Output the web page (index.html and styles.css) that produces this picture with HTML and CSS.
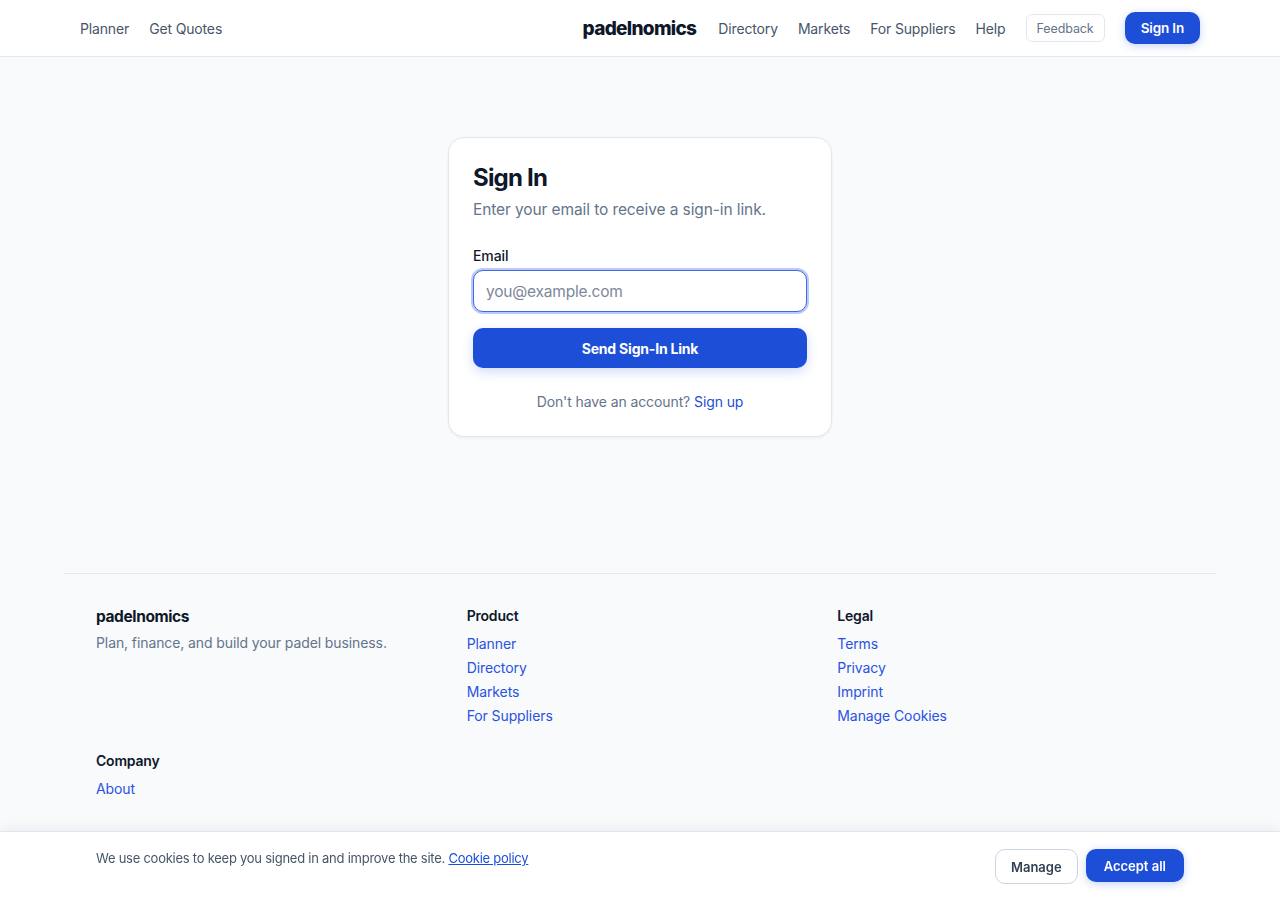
FILE: index.html
```html
<!DOCTYPE html>
<html lang="en">
<head>
<meta charset="utf-8">
<title>Sign In - padelnomics</title>
<link rel="stylesheet" href="styles.css">
</head>
<body>
<header class="topbar">
  <div class="topbar-inner">
    <nav class="nav-left">
      <a href="#">Planner</a>
      <a href="#">Get Quotes</a>
    </nav>
    <div class="nav-right">
      <a class="logo" href="#">padelnomics</a>
      <a href="#">Directory</a>
      <a href="#">Markets</a>
      <a href="#">For Suppliers</a>
      <a href="#">Help</a>
      <button class="btn-feedback">Feedback</button>
      <a class="btn-signin" href="#">Sign In</a>
    </div>
  </div>
</header>

<main class="main">
  <section class="card">
    <h1 class="card-title">Sign In</h1>
    <p class="card-sub">Enter your email to receive a sign-in link.</p>
    <form class="form">
      <label class="label" for="email">Email</label>
      <input class="input" id="email" type="email" placeholder="you@example.com">
      <button type="button" class="btn-primary">Send Sign-In Link</button>
    </form>
    <p class="card-foot">Don't have an account? <a href="#">Sign up</a></p>
  </section>
</main>

<footer class="footer">
  <div class="footer-inner">
    <div class="fcol">
      <div class="flogo">padelnomics</div>
      <p class="ftag">Plan, finance, and build your padel business.</p>
    </div>
    <div class="fcol">
      <h4>Product</h4>
      <a href="#">Planner</a>
      <a href="#">Directory</a>
      <a href="#">Markets</a>
      <a href="#">For Suppliers</a>
    </div>
    <div class="fcol">
      <h4>Legal</h4>
      <a href="#">Terms</a>
      <a href="#">Privacy</a>
      <a href="#">Imprint</a>
      <a href="#">Manage Cookies</a>
    </div>
    <div class="fcol">
      <h4>Company</h4>
      <a href="#">About</a>
    </div>
  </div>
</footer>

<div class="cookie">
  <div class="cookie-inner">
    <p>We use cookies to keep you signed in and improve the site. <a href="#">Cookie policy</a></p>
    <div class="cookie-btns">
      <button class="btn-manage">Manage</button>
      <button class="btn-accept">Accept all</button>
    </div>
  </div>
</div>
</body>
</html>
```

FILE: styles.css
```css
* { box-sizing: border-box; }
html, body { margin: 0; padding: 0; }
body {
  font-family: Inter, "Noto Sans", sans-serif;
  background: #f8fafc;
  color: #0f172a;
  min-height: 900px;
  padding-bottom: 120px;
}
a { text-decoration: none; color: inherit; }
button { font-family: inherit; cursor: pointer; }

.topbar {
  height: 57px;
  background: #fff;
  border-bottom: 1px solid #e2e8f0;
}
.topbar-inner {
  max-width: 1120px;
  margin: 0 auto;
  height: 56px;
  display: flex;
  align-items: center;
  justify-content: space-between;
}
.nav-left, .nav-right {
  display: flex;
  align-items: center;
  font-size: 14px;
  color: #475569;
  letter-spacing: -0.15px;
}
.nav-left { gap: 20px; }
.nav-right { gap: 20px; }
.logo {
  font-size: 19px;
  font-weight: 800;
  color: #0f172a;
  letter-spacing: -0.7px;
  margin-right: 2px;
}
.btn-feedback {
  height: 28px;
  padding: 0 10px;
  background: #fff;
  border: 1px solid #e2e8f0;
  border-radius: 6px;
  color: #64748b;
  font-size: 12.5px;
  letter-spacing: -0.1px;
}
.btn-signin {
  height: 32px;
  padding: 0 16px;
  display: flex;
  align-items: center;
  background: #1d4ed8;
  color: #fff;
  font-weight: 600;
  font-size: 13.5px;
  border-radius: 10px;
  box-shadow: 0 2px 8px rgba(29, 78, 216, 0.25);
}

.main {
  display: flex;
  justify-content: center;
  padding: 80px 0 136px;
}
.card {
  width: 384px;
  background: #fff;
  border: 1px solid #e2e8f0;
  border-radius: 16px;
  padding: 24px;
  box-shadow: 0 1px 3px rgba(15, 23, 42, 0.06);
}
.card-title {
  margin: 0;
  font-size: 24px;
  font-weight: 700;
  letter-spacing: -0.8px;
  line-height: 32px;
}
.card-sub {
  margin: 4px 0 0;
  font-size: 15.5px;
  color: #64748b;
  line-height: 24px;
  letter-spacing: -0.1px;
}
.form { display: flex; flex-direction: column; margin-top: 24px; }
.label {
  font-size: 14px;
  font-weight: 500;
  line-height: 20px;
  margin-bottom: 4px;
  letter-spacing: -0.1px;
}
.input {
  height: 42px;
  border: 1.5px solid #4169e1;
  border-radius: 10px;
  padding: 0 12px;
  font-family: inherit;
  font-size: 15.5px;
  color: #0f172a;
  letter-spacing: -0.2px;
  outline: none;
  box-shadow: 0 0 0 2px rgba(59, 102, 230, 0.35);
}
.input::placeholder { color: #7c8799; }
.btn-primary {
  margin-top: 16px;
  height: 40px;
  border: none;
  border-radius: 10px;
  background: #1d4ed8;
  color: #fff;
  font-size: 14px;
  font-weight: 700;
  letter-spacing: -0.2px;
  box-shadow: 0 4px 12px rgba(29, 78, 216, 0.2);
}
.card-foot {
  margin: 24px 0 0;
  text-align: center;
  font-size: 14px;
  color: #64748b;
  line-height: 20px;
  letter-spacing: -0.1px;
}
.card-foot a { color: #1d4ed8; }

.footer {
  max-width: 1152px;
  margin: 0 auto;
  border-top: 1px solid #e2e8f0;
}
.footer-inner {
  padding: 31px 32px 24px;
  display: grid;
  grid-template-columns: repeat(3, 1fr);
  column-gap: 24px;
  row-gap: 24px;
}
.fcol { display: flex; flex-direction: column; gap: 4px; }
.flogo {
  font-size: 15.5px;
  font-weight: 700;
  letter-spacing: -0.4px;
  line-height: 24px;
}
.ftag {
  margin: 0;
  font-size: 14px;
  color: #64748b;
  line-height: 20px;
  letter-spacing: -0.1px;
}
.fcol h4 {
  margin: 1px 0 4px;
  font-size: 14px;
  font-weight: 600;
  line-height: 20px;
  letter-spacing: -0.2px;
}
.fcol a {
  font-size: 14px;
  line-height: 20px;
  color: #2a52e0;
  letter-spacing: -0.1px;
}

.cookie {
  position: fixed;
  left: 0;
  right: 0;
  bottom: 0;
  height: 69px;
  background: #fff;
  border-top: 1px solid #e2e8f0;
  box-shadow: 0 -4px 12px rgba(15, 23, 42, 0.05);
}
.cookie-inner {
  max-width: 1088px;
  margin: 0 auto;
  display: flex;
  justify-content: space-between;
  align-items: flex-start;
  padding-top: 17px;
}
.cookie p {
  margin: 0;
  font-size: 13px;
  color: #475569;
  line-height: 18px;
  letter-spacing: -0.25px;
}
.cookie p a { color: #1d4ed8; text-decoration: underline; }
.cookie-btns { display: flex; gap: 8px; }
.btn-manage {
  height: 35px;
  padding: 0 15px;
  background: #fff;
  border: 1px solid #cbd5e1;
  border-radius: 10px;
  color: #334155;
  font-size: 13px;
  font-weight: 600;
}
.btn-accept {
  height: 33px;
  padding: 0 18px;
  background: #1d4ed8;
  border: none;
  border-radius: 10px;
  color: #fff;
  font-size: 13px;
  font-weight: 600;
  box-shadow: 0 2px 8px rgba(29, 78, 216, 0.25);
}
```
